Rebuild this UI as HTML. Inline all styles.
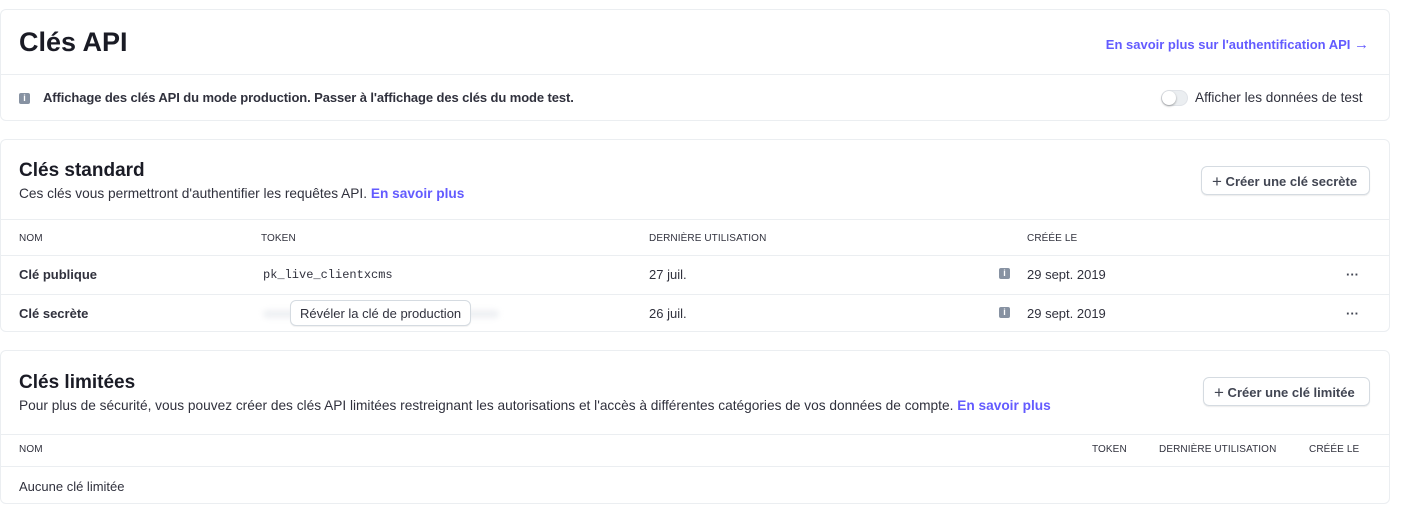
<!DOCTYPE html>
<html><head><meta charset="utf-8"><style>
*{margin:0;padding:0;box-sizing:border-box}
body{width:1405px;height:532px;background:#fff;font-family:"Liberation Sans",sans-serif;color:#30313d;position:relative;overflow:hidden}
.card{position:absolute;left:0;width:1390px;border:1px solid #ebeef1;border-radius:6px;background:#fff}
.a{position:absolute;white-space:nowrap}
.hr{position:absolute;left:0;right:0;height:1px;background:#ebeef1}
.th{font-size:10px;font-weight:normal;color:#30313d;letter-spacing:.1px}
.td{font-size:13px}
.link{color:#635bff;font-weight:bold}
.btn{position:absolute;height:29px;border:1px solid #d5dbe1;border-radius:6px;box-shadow:0 1px 1px rgba(0,0,0,.08);font-size:13px;font-weight:bold;color:#414552;padding:4px 10px 0 10px;white-space:nowrap}
.info{position:absolute;display:block;width:11px;height:11px;background:#8792a2;border-radius:2px;color:#fff;font-size:9px;font-weight:bold;text-align:center;line-height:11px}
.dots{font-size:13px;font-weight:bold;color:#414552}
</style></head><body>

<div class="card" style="top:9px;height:112px">
  <div class="a" style="left:18px;top:17px;font-size:27px;font-weight:bold;color:#1a1b25">Clés API</div>
  <div class="a link" style="right:20px;top:26px;font-size:13px">En savoir plus sur l'authentification API <span style="font-size:15px">→</span></div>
  <div class="hr" style="top:64px"></div>
  <span class="info" style="left:18px;top:83px">i</span>
  <div class="a" style="left:42px;top:80px;font-size:13px;font-weight:bold;color:#30313d;letter-spacing:-.1px">Affichage des clés API du mode production. Passer à l'affichage des clés du mode test.</div>
  <div class="a" style="left:1160px;top:80px;width:27px;height:16px;border-radius:8px;background:#ebeef1;border:1px solid #e0e3e8"><div style="position:absolute;left:0;top:0;width:14px;height:14px;border-radius:7px;background:#fff;box-shadow:0 1px 2px rgba(0,0,0,.35)"></div></div>
  <div class="a" style="left:1194px;top:80px;font-size:13.6px;color:#30313d">Afficher les données de test</div>
</div>

<div class="card" style="top:139px;height:193px">
  <div class="a" style="left:18px;top:20px;font-size:19px;font-weight:bold;color:#1a1b25">Clés standard</div>
  <div class="a" style="left:18px;top:46px;font-size:13.7px">Ces clés vous permettront d'authentifier les requêtes API. <span class="link">En savoir plus</span></div>
  <div class="btn" style="left:1200px;top:26px;width:169px"><span style="font-size:17px;font-weight:normal;position:relative;top:1px">+</span> Créer une clé secrète</div>
  <div class="hr" style="top:79px"></div>
  <div class="a th" style="left:18px;top:93px">NOM</div>
  <div class="a th" style="left:260px;top:93px">TOKEN</div>
  <div class="a th" style="left:648px;top:93px">DERNIÈRE UTILISATION</div>
  <div class="a th" style="left:1026px;top:93px">CRÉÉE LE</div>
  <div class="hr" style="top:115px"></div>
  <div class="a td" style="left:18px;top:127px;font-weight:bold">Clé publique</div>
  <div class="a" style="left:262px;top:128px;font-family:'Liberation Mono',monospace;font-size:12px">pk_live_clientxcms</div>
  <div class="a td" style="left:648px;top:127px">27 juil.</div>
  <span class="info" style="left:998px;top:128px">i</span>
  <div class="a td" style="left:1026px;top:127px">29 sept. 2019</div>
  <div class="a dots" style="left:1345px;top:127px">···</div>
  <div class="hr" style="top:154px"></div>
  <div class="a td" style="left:18px;top:166px;font-weight:bold">Clé secrète</div>
  <div class="a" style="left:262px;top:170px;width:236px;height:8px;background:#eef0f3;filter:blur(3px);border-radius:4px"></div>
  <div class="a" style="left:289px;top:160px;height:26px;padding:5px 9px 0;border:1px solid #d5dbe1;border-radius:6px;background:#fff;font-size:13px;box-shadow:0 1px 1px rgba(0,0,0,.06)">Révéler la clé de production</div>
  <div class="a td" style="left:648px;top:166px">26 juil.</div>
  <span class="info" style="left:998px;top:167px">i</span>
  <div class="a td" style="left:1026px;top:166px">29 sept. 2019</div>
  <div class="a dots" style="left:1345px;top:166px">···</div>
</div>

<div class="card" style="top:350px;height:154px">
  <div class="a" style="left:18px;top:21px;font-size:19px;font-weight:bold;color:#1a1b25">Clés limitées</div>
  <div class="a" style="left:18px;top:47px;font-size:13.7px">Pour plus de sécurité, vous pouvez créer des clés API limitées restreignant les autorisations et l'accès à différentes catégories de vos données de compte. <span class="link">En savoir plus</span></div>
  <div class="btn" style="left:1202px;top:26px;width:167px"><span style="font-size:17px;font-weight:normal;position:relative;top:1px">+</span> Créer une clé limitée</div>
  <div class="hr" style="top:83px"></div>
  <div class="a th" style="left:18px;top:93px">NOM</div>
  <div class="a th" style="left:1091px;top:93px">TOKEN</div>
  <div class="a th" style="left:1158px;top:93px">DERNIÈRE UTILISATION</div>
  <div class="a th" style="left:1308px;top:93px">CRÉÉE LE</div>
  <div class="hr" style="top:115px"></div>
  <div class="a td" style="left:18px;top:128px">Aucune clé limitée</div>
</div>

</body></html>
